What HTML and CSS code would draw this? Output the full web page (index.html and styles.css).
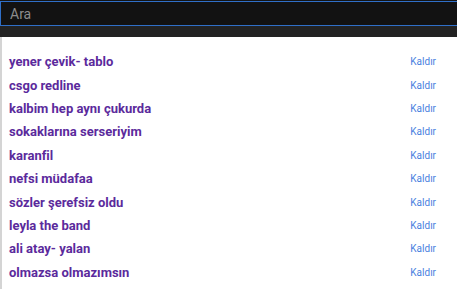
FILE: index.html
```html
<!DOCTYPE html>
<html lang="tr">
<head>
    <meta charset="UTF-8">
    <title>Arama geçmişi</title>
    <link rel="stylesheet" href="styles.css">
</head>
<body>
    <div class="top-bar">
        <input class="search" type="text" placeholder="Ara">
    </div>
    <div class="strip"></div>
    <div class="list">
        <div class="row"><a class="term" href="#">yener çevik- tablo</a><a class="remove" href="#">Kaldır</a></div>
        <div class="row"><a class="term" href="#">csgo redline</a><a class="remove" href="#">Kaldır</a></div>
        <div class="row"><a class="term" href="#">kalbim hep aynı çukurda</a><a class="remove" href="#">Kaldır</a></div>
        <div class="row"><a class="term" href="#">sokaklarına serseriyim</a><a class="remove" href="#">Kaldır</a></div>
        <div class="row"><a class="term" href="#">karanfil</a><a class="remove" href="#">Kaldır</a></div>
        <div class="row"><a class="term" href="#">nefsi müdafaa</a><a class="remove" href="#">Kaldır</a></div>
        <div class="row"><a class="term" href="#">sözler şerefsiz oldu</a><a class="remove" href="#">Kaldır</a></div>
        <div class="row"><a class="term" href="#">leyla the band</a><a class="remove" href="#">Kaldır</a></div>
        <div class="row"><a class="term" href="#">ali atay- yalan</a><a class="remove" href="#">Kaldır</a></div>
        <div class="row"><a class="term" href="#">olmazsa olmazımsın</a><a class="remove" href="#">Kaldır</a></div>
    </div>
</body>
</html>
```
FILE: styles.css
```css
body {
    margin: 0;
    font-family: Roboto, "Liberation Sans", sans-serif;
    background: #ffffff;
}
.top-bar {
    background: #141414;
    padding-top: 1px;
}
.search {
    display: block;
    box-sizing: border-box;
    width: 100%;
    height: 25px;
    margin: 0;
    padding: 0 9px;
    border: 1px solid #2f6fc8;
    border-right: none;
    background: #121212;
    color: #cccccc;
    font-family: Roboto, "Liberation Sans", sans-serif;
    font-size: 14px;
    outline: none;
}
.search::placeholder {
    color: #8c8c8c;
}
.strip {
    height: 11px;
    background: #222222;
}
.list {
    border-left: 2px solid #d4d4d4;
    padding: 13px 0 6px 7px;
    min-height: 240px;
}
.row {
    display: flex;
    justify-content: space-between;
    align-items: center;
    height: 23.4px;
    padding-right: 21px;
}
.term {
    color: #5b2a9c;
    font-size: 13px;
    font-weight: bold;
    text-decoration: none;
}
.remove {
    color: #4a7fe0;
    font-size: 10px;
    text-decoration: none;
}
```
